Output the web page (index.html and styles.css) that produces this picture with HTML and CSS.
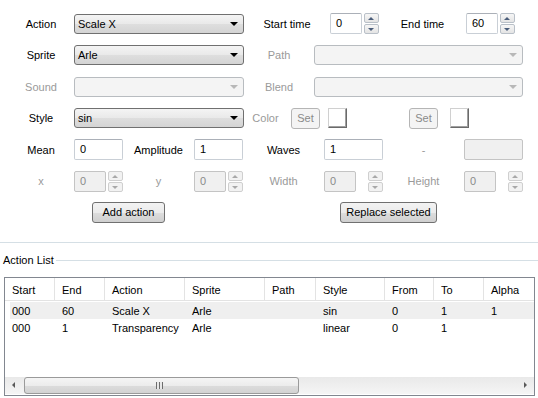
FILE: index.html
```html
<!DOCTYPE html>
<html>
<head>
<meta charset="utf-8">
<link rel="stylesheet" href="styles.css">
</head>
<body>
<div class="form">
  <div class="row">
    <span class="lbl w-first">Action</span>
    <div class="combo w-combo">Scale X<i class="arr"></i></div>
    <span class="lbl" style="width:86px">Start time</span>
    <div class="spin"><div class="inp w-spin">0</div><div class="sbtns"><b class="up"></b><b class="dn"></b></div></div>
    <span class="lbl" style="width:87px">End time</span>
    <div class="spin"><div class="inp w-spin">60</div><div class="sbtns"><b class="up"></b><b class="dn"></b></div></div>
  </div>
  <div class="row">
    <span class="lbl w-first">Sprite</span>
    <div class="combo w-combo">Arle<i class="arr"></i></div>
    <span class="lbl dis" style="width:70px">Path</span>
    <div class="combo dis w-combo2"><i class="arr"></i></div>
  </div>
  <div class="row">
    <span class="lbl dis w-first">Sound</span>
    <div class="combo dis w-combo"><i class="arr"></i></div>
    <span class="lbl dis" style="width:70px">Blend</span>
    <div class="combo dis w-combo2"><i class="arr"></i></div>
  </div>
  <div class="row">
    <span class="lbl w-first">Style</span>
    <div class="combo w-combo">sin<i class="arr"></i></div>
    <span class="lbl dis" style="width:43px">Color</span>
    <div class="btn dis setb" style="margin-left:4px">Set</div>
    <div class="swatch" style="margin-left:8px"></div>
    <div class="btn dis setb" style="margin-left:62px">Set</div>
    <div class="swatch" style="margin-left:12px"></div>
  </div>
  <div class="row">
    <span class="lbl w-first">Mean</span>
    <div class="inp" style="width:49px">0</div>
    <span class="lbl" style="width:71px">Amplitude</span>
    <div class="inp" style="width:49px">1</div>
    <span class="lbl" style="width:81px">Waves</span>
    <div class="inp" style="width:59px">1</div>
    <span class="lbl dis" style="width:81px">-</span>
    <div class="inp dis" style="width:59px"></div>
  </div>
  <div class="row">
    <span class="lbl dis w-first">x</span>
    <div class="spin dis"><div class="inp dis w-spin">0</div><div class="sbtns"><b class="up"></b><b class="dn"></b></div></div>
    <span class="lbl dis" style="width:71px">y</span>
    <div class="spin dis"><div class="inp dis w-spin">0</div><div class="sbtns"><b class="up"></b><b class="dn"></b></div></div>
    <span class="lbl dis" style="width:81px">Width</span>
    <div class="spin dis wide"><div class="inp dis w-spin">0</div><div class="sbtns"><b class="up"></b><b class="dn"></b></div></div>
    <span class="lbl dis" style="width:81px">Height</span>
    <div class="spin dis wide"><div class="inp dis w-spin">0</div><div class="sbtns"><b class="up"></b><b class="dn"></b></div></div>
  </div>
  <div class="row">
    <div class="btn" style="margin-left:92px;width:73px">Add action</div>
    <div class="btn" style="margin-left:175px;width:97px">Replace selected</div>
  </div>
</div>
<div class="sep"></div>
<div class="group-title"><span>Action List</span><div class="gline"></div></div>
<div class="table">
  <div class="thead trow">
    <div>Start</div><div>End</div><div>Action</div><div>Sprite</div><div>Path</div><div>Style</div><div>From</div><div>To</div><div>Alpha</div>
  </div>
  <div class="tbody">
    <div class="trow sel">
      <div>000</div><div>60</div><div>Scale X</div><div>Arle</div><div></div><div>sin</div><div>0</div><div>1</div><div>1</div>
    </div>
    <div class="trow">
      <div>000</div><div>1</div><div>Transparency</div><div>Arle</div><div></div><div>linear</div><div>0</div><div>1</div><div></div>
    </div>
  </div>
  <div class="hscroll">
    <div class="sarrow left"></div>
    <div class="thumb"><span class="grip"></span></div>
    <div class="track"></div>
    <div class="sarrow right"></div>
  </div>
</div>
</body>
</html>
```

FILE: styles.css
```css
* { box-sizing: border-box; }
html, body { margin: 0; padding: 0; background: #ffffff; }
body {
  width: 538px;
  height: 398px;
  overflow: hidden;
  font-family: "Liberation Sans", Arial, sans-serif;
  font-size: 11px;
  color: #000;
}
.form {
  height: 242px;
  padding-top: 13px;
  display: flex;
  flex-direction: column;
  gap: 10.5px;
}
.row {
  display: flex;
  align-items: center;
  height: 21px;
}
.lbl {
  text-align: center;
  white-space: nowrap;
  flex: none;
}
.lbl.dis { color: #9a9a9a; }
.w-first { margin-left: 8px; width: 66px; }
.w-combo { width: 170px; }
.w-combo2 { width: 209px; }
.w-spin { width: 32px; }

.combo {
  position: relative;
  height: 20px;
  border: 1px solid #707070;
  border-radius: 3px;
  background: linear-gradient(#f4f4f4, #e9e9e9 50%, #dedede 51%, #d4d4d4);
  padding: 3px 0 0 3px;
  flex: none;
}
.combo.dis {
  border-color: #b8bcc0;
  background: #f4f4f4;
}
.arr {
  position: absolute;
  right: 5px;
  top: 7px;
  width: 0; height: 0;
  border-left: 4px solid transparent;
  border-right: 4px solid transparent;
  border-top: 4px solid #000;
}
.combo.dis .arr { border-top-color: #b8b8b8; }

.inp {
  height: 21px;
  border: 1px solid #c9cfd6;
  border-top-color: #abb0b8;
  border-radius: 2px;
  background: #fff;
  padding: 3px 0 0 5px;
  flex: none;
}
.inp.dis {
  background: #f0f0f0;
  border-color: #c4c4c4;
  color: #8a8a8a;
}

.spin {
  display: flex;
  align-items: stretch;
  height: 21px;
  flex: none;
}
.sbtns {
  margin-left: 2px;
  width: 15px;
  display: flex;
  flex-direction: column;
  gap: 1px;
}
.spin.wide .sbtns { margin-left: 12px; }
.sbtns b {
  position: relative;
  flex: 1;
  border: 1px solid #b9c0c8;
  border-radius: 2px;
  background: linear-gradient(#f6f6f6, #e4e4e4);
}
.sbtns b::after {
  content: "";
  position: absolute;
  left: 3px;
  top: 3px;
  border-left: 3.5px solid transparent;
  border-right: 3.5px solid transparent;
}
.sbtns b.up::after { border-bottom: 3px solid #4a5d7a; }
.sbtns b.dn::after { border-top: 3px solid #4a5d7a; }
.spin.dis .sbtns b { border-color: #cfcfcf; background: #f2f2f2; }
.spin.dis .sbtns b.up::after { border-bottom-color: #a8a8a8; }
.spin.dis .sbtns b.dn::after { border-top-color: #a8a8a8; }

.btn {
  height: 21px;
  border: 1px solid #707070;
  border-radius: 3px;
  background: linear-gradient(#f3f3f3, #ebebeb 50%, #dddddd 51%, #cfcfcf);
  text-align: center;
  padding-top: 3px;
  flex: none;
  white-space: nowrap;
}
.btn.dis {
  border-color: #b5b5b5;
  background: #f4f4f4;
  color: #8a8a8a;
}
.setb { width: 29px; height: 21px; }
.swatch {
  width: 19px;
  height: 20px;
  background: #fff;
  border: 1px solid;
  border-color: #d0d0d0 #6a6a6a #6a6a6a #d0d0d0;
  box-shadow: inset -1px -1px 0 #a0a0a0;
  flex: none;
}

.sep {
  height: 1px;
  background: #d5dfe5;
}
.group-title {
  display: flex;
  align-items: center;
  height: 34px;
  padding-left: 3px;
}
.group-title span { flex: none; padding-right: 2px; }
.gline { flex: 1; height: 1px; background: #d5dfe5; }

.table {
  margin-left: 4px;
  width: 531px;
  height: 119px;
  border: 1px solid #828790;
  display: flex;
  flex-direction: column;
}
.trow {
  display: grid;
  grid-template-columns: 50px 50px 80px 80px 51px 69px 49px 50px 1fr;
}
.trow > div {
  padding-left: 7px;
  white-space: nowrap;
  overflow: hidden;
}
.thead {
  height: 23px;
  border-bottom: 1px solid #e3e3e3;
  align-items: center;
}
.thead > div {
  height: 100%;
  display: flex;
  align-items: center;
  border-right: 1px solid #e3e3e3;
  padding-top: 1px;
}
.thead > div:first-child { padding-left: 7px; }
.thead > div:last-child { border-right: none; }
.tbody {
  flex: 1;
  padding-top: 1px;
}
.tbody .trow {
  height: 17px;
  align-items: center;
}
.tbody .trow.sel {
  background: linear-gradient(to right, transparent 5px, #efefef 5px);
}
.hscroll {
  height: 17px;
  display: flex;
  align-items: stretch;
  background: linear-gradient(to bottom, #e9e9e9, #f5f5f5);
  margin-bottom: 1px;
}
.sarrow {
  position: relative;
  width: 17px;
  flex: none;
}
.sarrow::after {
  content: "";
  position: absolute;
  top: 5px;
  border-top: 3.5px solid transparent;
  border-bottom: 3.5px solid transparent;
}
.sarrow.left::after { left: 7px; border-right: 3.5px solid #5a5a5a; }
.sarrow.right::after { left: 7px; border-left: 3.5px solid #5a5a5a; }
.thumb {
  position: relative;
  margin-left: 2px;
  width: 275px;
  flex: none;
  border: 1px solid #9a9a9a;
  border-radius: 3px;
  background: linear-gradient(#f5f5f5, #ececec 50%, #dcdcdc 51%, #d3d3d3);
}
.grip {
  position: absolute;
  left: 131px;
  top: 4px;
  width: 7px;
  height: 7px;
  background: repeating-linear-gradient(to right, #6d6d6d 0 1px, #e8e8e8 1px 3px);
}
.track { flex: 1; }
```
